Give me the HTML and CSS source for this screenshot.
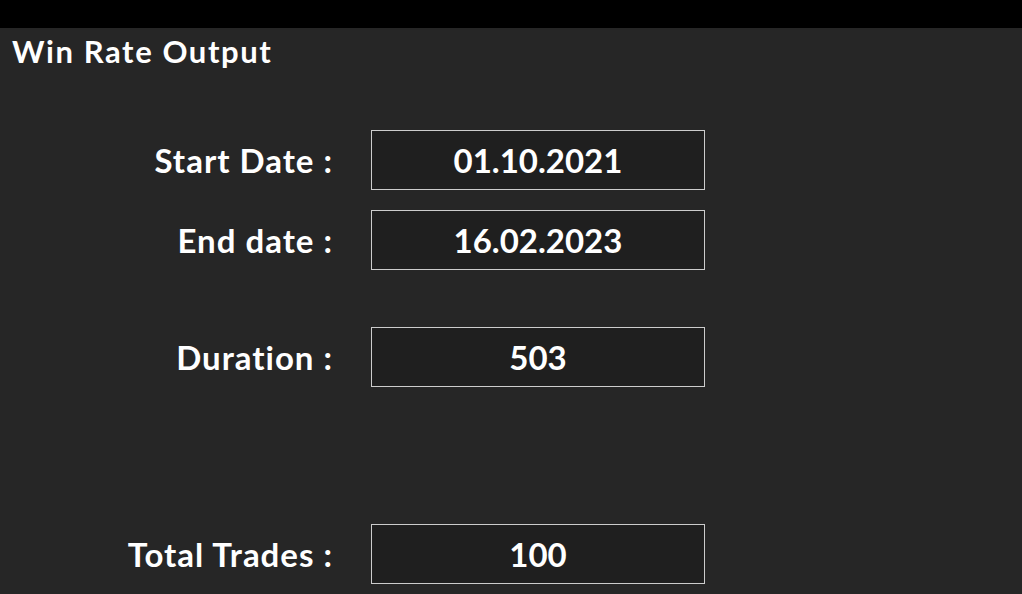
FILE: index.html
```html
<!DOCTYPE html>
<html>
<head>
<meta charset="utf-8">
<link rel="stylesheet" href="styles.css">
</head>
<body>
<div class="topbar"></div>
<main class="panel">
  <h1 class="title">Win Rate Output</h1>
  <div class="form">
    <div class="row row-start">
      <span class="label">Start Date :</span>
      <div class="field">01.10.2021</div>
    </div>
    <div class="row row-end">
      <span class="label">End date :</span>
      <div class="field">16.02.2023</div>
    </div>
    <div class="row row-duration">
      <span class="label">Duration :</span>
      <div class="field">503</div>
    </div>
    <div class="row row-trades">
      <span class="label">Total Trades :</span>
      <div class="field">100</div>
    </div>
  </div>
</main>
</body>
</html>
```
FILE: styles.css
```css
html, body {
  margin: 0;
  padding: 0;
  height: 100%;
  background: #262626;
  overflow: hidden;
}
body {
  font-family: Lato, "Open Sans", "Liberation Sans", sans-serif;
  font-weight: 700;
  color: #ffffff;
}
.topbar {
  height: 28px;
  background: #000000;
}
.panel {
  padding: 0;
}
.title {
  margin: 0;
  padding: 5px 0 0 12px;
  font-size: 31px;
  line-height: 36px;
  letter-spacing: 1.6px;
  font-weight: 700;
}
.form {
  display: flex;
  flex-direction: column;
}
.row {
  display: grid;
  grid-template-columns: 333px 334px;
  column-gap: 38px;
  align-items: center;
  height: 60px;
}
.row-start { margin-top: 61px; }
.row-end { margin-top: 20px; }
.row-duration { margin-top: 57px; }
.row-trades { margin-top: 137px; }
.label {
  text-align: right;
  font-size: 33px;
  letter-spacing: 1px;
}
.field {
  box-sizing: border-box;
  height: 60px;
  border: 1.5px solid #cccccc;
  background: #1f1f1f;
  display: flex;
  align-items: center;
  justify-content: center;
  font-size: 33px;
}
```
